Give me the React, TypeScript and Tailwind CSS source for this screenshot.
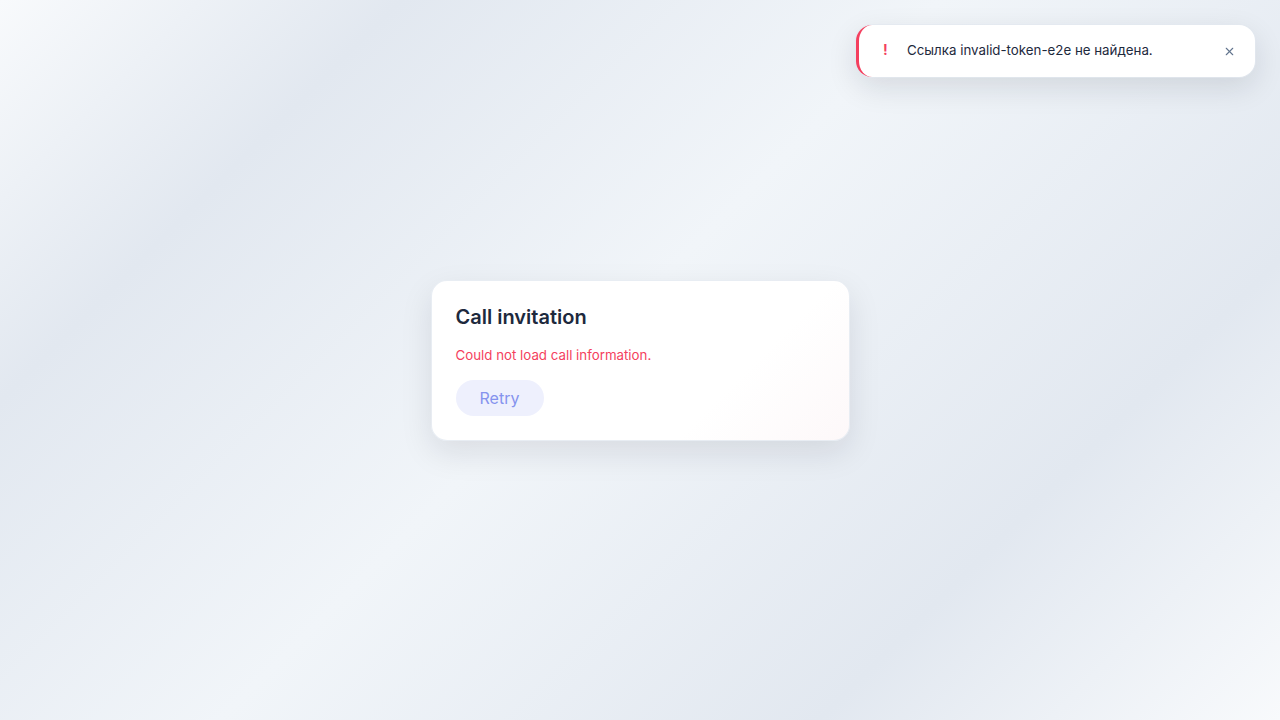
import React from 'react';
import { X } from 'lucide-react';

export default function App() {
  return (
    <div
      className="relative min-h-screen w-full bg-[linear-gradient(135deg,#f8fafc_0%,#e2e8f0_20%,#f1f5f9_47%,#e2e8f0_77%,#f8fafc_100%)] flex items-center justify-center"
      style={{ fontFamily: 'Inter, "Noto Sans", sans-serif' }}
    >
      {/* Toast */}
      <div className="absolute top-[25px] right-[25px] w-[399px] h-[52px] flex items-center bg-white rounded-2xl border-l-[3px] border-[#f43f5e] shadow-[0_10px_30px_rgba(15,23,42,0.12)] ring-1 ring-slate-200/70">
        <span className="w-[48px] pl-[24px] text-[#f43f5e] text-sm font-bold -mt-[2px]">!</span>
        <span className="flex-1 text-[13.3px] text-slate-800 -mt-[1px]">Ссылка invalid-token-e2e не найдена.</span>
        <button className="mr-[19px] mt-[1px] text-slate-500">
          <X className="w-[13px] h-[13px]" strokeWidth={2} />
        </button>
      </div>

      {/* Card */}
      <div className="w-[419px] h-[161px] bg-[linear-gradient(135deg,#ffffff_0%,#ffffff_70%,#fdf8f9_100%)] rounded-2xl border border-slate-200/80 shadow-[0_12px_32px_rgba(15,23,42,0.1)] px-6 pt-[22px]">
        <h1 className="text-[20px] leading-7 font-semibold text-slate-800">Call invitation</h1>
        <p className="mt-[15px] text-[13.3px] text-[#f43f5e]">Could not load call information.</p>
        <button className="mt-[15px] w-[88px] h-[36px] rounded-full bg-[#eef0fd] text-[#8593ee] text-base">
          Retry
        </button>
      </div>
    </div>
  );
}
